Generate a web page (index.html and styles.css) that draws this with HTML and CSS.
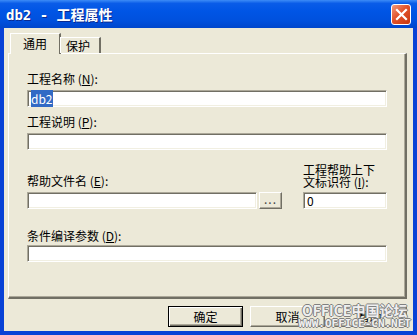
FILE: index.html
```html
<!DOCTYPE html>
<html lang="zh-CN">
<head>
  <meta charset="UTF-8" />
  <title>db2 - 工程属性</title>
  <link rel="stylesheet" href="styles.css">
</head>
<body>
  <div class="dlg">
    <div class="caption">
      <span class="caption-text">db2 - 工程属性</span>
      <span class="xbtn">
        <svg width="13" height="13" viewBox="0 0 13 13">
          <path d="M2 2 L11 11 M11 2 L2 11" stroke="#fff" stroke-width="2.2" stroke-linecap="square"/>
        </svg>
      </span>
    </div>

    <div class="client">
      <div class="tabs">
        <div class="tab active">通用</div>
        <div class="tab second">保护</div>
      </div>

      <div class="panel">
        <label class="lbl">工程名称 (<u>N</u>):</label>
        <div class="field"><span class="sel">db2</span></div>

        <label class="lbl">工程说明 (<u>P</u>):</label>
        <div class="field"></div>

        <div class="row">
          <div class="col grow">
            <label class="lbl">帮助文件名 (<u>E</u>):</label>
            <div class="row-in">
              <div class="field grow"></div>
              <div class="dots">...</div>
            </div>
          </div>
          <div class="col ctx">
            <label class="lbl two">工程帮助上下<br>文标识符 (<u>I</u>):</label>
            <div class="field">0</div>
          </div>
        </div>

        <label class="lbl last">条件编译参数 (<u>D</u>):</label>
        <div class="field"></div>
      </div>

      <div class="buttons">
        <div class="btn default">确定</div>
        <div class="btn">取消</div>
        <div class="btn">帮助</div>
      </div>

      <div class="watermark">
        <div class="wm-big">OFFICE中国论坛</div>
        <div class="wm-small">WWW.OFFICE-CN.NET</div>
      </div>
    </div>
  </div>
</body>
</html>
```

FILE: styles.css
```css
body {
  margin: 0;
  font-family: "Noto Sans CJK SC", "DejaVu Sans", sans-serif;
  font-size: 12px;
  color: #000;
}

.dlg {
  width: 417px;
  height: 335px;
  display: flex;
  flex-direction: column;
  background-color: #0842d6;
}

.caption {
  height: 28px;
  flex: none;
  display: flex;
  align-items: center;
  justify-content: space-between;
  padding: 0 6px 0 6px;
  box-sizing: border-box;
  background: linear-gradient(#3d8cf7 0%, #0a5ce8 12%, #0055e5 40%, #0050dd 75%, #0046cc 100%);
}

.caption-text {
  color: #ffffff;
  font-family: "DejaVu Sans Mono", "Noto Sans CJK SC", monospace;
  font-weight: bold;
  font-size: 14px;
  text-shadow: 1px 1px #0a2a90;
}

.xbtn {
  width: 20px;
  height: 21px;
  display: flex;
  align-items: center;
  justify-content: center;
  border: 1px solid #ffffff;
  border-radius: 3px;
  background: linear-gradient(135deg, #f39a7d 0%, #e2532b 45%, #c8370e 100%);
  box-sizing: border-box;
}

.client {
  flex: 1;
  position: relative;
  margin: 0 4px 4px 4px;
  background-color: #ece9d8;
  padding: 5px 6px 0 4px;
  display: flex;
  flex-direction: column;
}

.tabs {
  display: flex;
  align-items: flex-end;
  height: 20px;
  margin-left: 2px;
  position: relative;
  z-index: 1;
}

.tab {
  box-sizing: border-box;
  border-style: solid;
  border-color: #ffffff #716f64 transparent #ffffff;
  border-width: 1px 2px 0 1px;
  background-color: #ece9d8;
}

.tab.active {
  height: 21px;
  line-height: 19px;
  padding: 0 12px;
  margin-bottom: -1px;
}

.tab.second {
  height: 16px;
  line-height: 15px;
  padding: 0 9px 0 5px;
  margin-left: -1px;
}

.panel {
  height: 246px;
  flex: none;
  box-sizing: border-box;
  border: 1px solid #ffffff;
  border-right: 2px solid #716f64;
  border-bottom: 2px solid #716f64;
  box-shadow: inset -1px -1px #aca899;
  padding: 18px 18px 0 18px;
  display: flex;
  flex-direction: column;
}

.lbl {
  display: block;
  line-height: 14px;
  margin-bottom: 4px;
}

.lbl.two {
  line-height: 12px;
  margin-bottom: 4px;
}

.lbl.last {
  margin-top: 12px;
  margin-bottom: 2px;
}

.field {
  height: 17px;
  box-sizing: border-box;
  background-color: #ffffff;
  border: 1px solid;
  border-color: #aca899 #ffffff #ffffff #aca899;
  box-shadow: inset 1px 1px #716f64, inset -1px -1px #f1efe2;
  padding: 1px 3px;
  line-height: 14px;
  margin-bottom: 8px;
}

.sel {
  background-color: #316ac5;
  color: #ffffff;
}

.row {
  display: flex;
  align-items: flex-end;
  gap: 21px;
  margin-top: 6px;
}

.col {
  display: flex;
  flex-direction: column;
}

.grow {
  flex: 1;
}

.ctx {
  width: 84px;
}

.row-in {
  display: flex;
  gap: 2px;
}

.dots {
  width: 23px;
  height: 17px;
  box-sizing: border-box;
  border: 1px solid;
  border-color: #ffffff #716f64 #716f64 #ffffff;
  box-shadow: inset -1px -1px #aca899;
  text-align: center;
  line-height: 11px;
  color: #444;
  letter-spacing: 1px;
}

.buttons {
  display: flex;
  justify-content: flex-end;
  gap: 7px;
  margin-top: 7px;
}

.btn {
  width: 75px;
  height: 21px;
  flex: none;
  box-sizing: border-box;
  text-align: center;
  line-height: 19px;
  border: 1px solid;
  border-color: #ffffff #716f64 #716f64 #ffffff;
  box-shadow: inset -1px -1px #aca899;
  background-color: #ece9d8;
}

.btn.default {
  border: 1px solid #000000;
  box-shadow: inset 1px 1px #ffffff, inset -1px -1px #716f64, inset -2px -2px #aca899;
}

/* forum watermark stamped over the bottom-right corner */
.watermark {
  position: absolute;
  right: 2px;
  bottom: 1px;
  color: rgba(255, 255, 255, 0.9);
  font-weight: bold;
  text-shadow: 1px 0 #808080, -1px 0 #808080, 0 1px #808080, 0 -1px #808080;
  text-align: center;
}

.wm-big {
  font-size: 14px;
  line-height: 16px;
}

.wm-small {
  font-family: "DejaVu Sans Mono", monospace;
  font-size: 11px;
  line-height: 12px;
}
```
